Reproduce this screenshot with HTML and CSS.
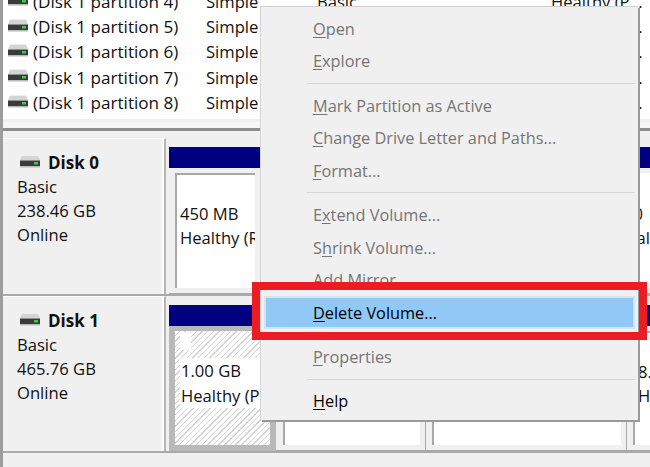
FILE: index.html
```html
<!DOCTYPE html>
<html lang="en">
<head>
<meta charset="utf-8">
<title>Disk Management</title>
<link rel="stylesheet" href="styles.css">
</head>
<body>
<svg class="defs" width="0" height="0" aria-hidden="true">
  <symbol id="disk" viewBox="0 0 20 13">
    <path d="M2 0.5H18L20 5.5H0Z" fill="#d4d4d4"/>
    <path d="M2 0.5H18" stroke="#efefef" stroke-width="1"/>
    <rect x="0" y="5.5" width="20" height="5.5" fill="#3a3a3a"/>
    <rect x="0" y="11" width="20" height="1.5" fill="#b8b8b8"/>
    <rect x="14" y="7" width="4" height="2.5" fill="#2fd13f"/>
  </symbol>
</svg>
<div class="app">
  <section class="list">
    <div class="row"><svg class="disk-icon"><use href="#disk"/></svg><span class="c-name">(Disk 1 partition 4)</span><span class="c-layout">Simple</span><span class="c-type">Basic</span><span class="c-status">Healthy (P...</span></div>
    <div class="row"><svg class="disk-icon"><use href="#disk"/></svg><span class="c-name">(Disk 1 partition 5)</span><span class="c-layout">Simple</span><span class="c-type">Basic</span><span class="c-status">Healthy (P...</span></div>
    <div class="row"><svg class="disk-icon"><use href="#disk"/></svg><span class="c-name">(Disk 1 partition 6)</span><span class="c-layout">Simple</span><span class="c-type">Basic</span><span class="c-status">Healthy (P...</span></div>
    <div class="row"><svg class="disk-icon"><use href="#disk"/></svg><span class="c-name">(Disk 1 partition 7)</span><span class="c-layout">Simple</span><span class="c-type">Basic</span><span class="c-status">Healthy (P...</span></div>
    <div class="row"><svg class="disk-icon"><use href="#disk"/></svg><span class="c-name">(Disk 1 partition 8)</span><span class="c-layout">Simple</span><span class="c-type">Basic</span><span class="c-status">Healthy (P...</span></div>
  </section>
  <div class="splitter"></div>
  <section class="disks">
    <div class="disk disk-0">
      <div class="label">
        <div class="label-title"><svg class="disk-icon"><use href="#disk"/></svg><b>Disk 0</b></div>
        <div>Basic</div>
        <div>238.46 GB</div>
        <div>Online</div>
      </div>
      <div class="volumes">
        <div class="bar"></div>
        <div class="parts">
          <div class="part part-a"><div class="inner"><div>450 MB</div><div>Healthy (Recovery)</div></div></div>
          <div class="part part-end"><div class="inner"><div class="end-size">100</div><div>Normal</div></div></div>
        </div>
      </div>
    </div>
    <div class="disk disk-1">
      <div class="label">
        <div class="label-title"><svg class="disk-icon"><use href="#disk"/></svg><b>Disk 1</b></div>
        <div>Basic</div>
        <div>465.76 GB</div>
        <div>Online</div>
      </div>
      <div class="volumes">
        <div class="bar"></div>
        <div class="parts">
          <div class="part part-sel"><div class="inner"><div class="notch"></div><div class="chip">1.00 GB<br>Healthy (P</div></div></div>
          <div class="part part-2"><div class="inner"></div></div>
          <div class="part part-3"><div class="inner"></div></div>
          <div class="part part-4"><div class="inner"><div>8.00 GB</div><div>Healthy (P</div></div></div>
        </div>
      </div>
    </div>
  </section>
</div>

<nav class="menu">
  <div class="item off"><u>O</u>pen</div>
  <div class="item off"><u>E</u>xplore</div>
  <hr class="sep">
  <div class="item off"><u>M</u>ark Partition as Active</div>
  <div class="item off"><u>C</u>hange Drive Letter and Paths...</div>
  <div class="item off"><u>F</u>ormat...</div>
  <hr class="sep">
  <div class="item off">E<u>x</u>tend Volume...</div>
  <div class="item off">S<u>h</u>rink Volume...</div>
  <div class="item off">A<u>d</u>d Mirror</div>
  <div class="item hot"><u>D</u>elete Volume...</div>
  <hr class="sep">
  <div class="item off"><u>P</u>roperties</div>
  <hr class="sep">
  <div class="item"><u>H</u>elp</div>
</nav>
<div class="callout"></div>
</body>
</html>
```
FILE: styles.css
```css
* { box-sizing: border-box; }
html, body { margin: 0; padding: 0; }
body {
  position: relative;
  width: 650px;
  height: 467px;
  overflow: hidden;
  background: #f0f0f0;
  color: #111;
  font-family: "Open Sans", "Noto Sans", sans-serif;
  font-size: 16.6px;
}
.defs { position: absolute; }
.app {
  display: flex;
  flex-direction: column;
  height: 467px;
  border-left: 3px solid #9d9d9d;
}
.list {
  height: 119px;
  background: #fff;
  overflow: hidden;
  font-size: 17.1px;
}
.row {
  display: flex;
  align-items: center;
  height: 25.4px;
  padding-left: 5px;
  white-space: nowrap;
  line-height: 25px;
}
.list .row:first-child { margin-top: -11.5px; }
.disk-icon { width: 20px; height: 13px; flex: none; }
.row .disk-icon { margin-top: -3px; }
.c-name { width: 173px; margin-left: 5px; }
.c-layout { width: 111px; font-size: 16.6px; }
.c-type { width: 234px; font-size: 16.6px; }
.c-status { font-size: 16.6px; }
.splitter {
  height: 12px;
  background: #f6f6f6;
  border-top: 3px solid #f0f0f0;
  border-bottom: 3px solid #8e8e8e;
}
.disks { flex: 0 0 322px; display: flex; flex-direction: column; }
.disk { display: flex; flex: none; }
.disk-0 { height: 165px; padding-top: 7px; border-bottom: 2px solid #a9a9a9; }
.disk-1 { height: 157px; border-bottom: 2px solid #a9a9a9; }
.label {
  flex: 0 0 163px;
  padding: 12px 0 0 14px;
  background: #f0f0f0;
  border-top: 1px solid #fff;
  border-right: 2px solid #b5b5b5;
  line-height: 24px;
  box-shadow: inset -2px 0 0 #fff;
}
.label-title {
  display: flex;
  align-items: center;
  gap: 8px;
  height: 24px;
  font-size: 17px;
}
.label-title .disk-icon { margin: -4px 0 0 3px; }
.label-title b { font-weight: 700; }
.volumes { flex: 1; min-width: 0; padding: 9px 0 0 3px; display: flex; flex-direction: column; overflow: hidden; }
.disk-0 .volumes { padding-top: 9px; margin-top: -7px; padding-top: 16px; }
.bar { height: 21px; flex: none; background: #000080; }
.parts { flex: 1; display: flex; min-height: 0; }
.part {
  flex: none;
  padding: 5px 5px 5px 6px;
  border-bottom: 1px solid #a9a9a9;
  border-right: 1px solid #a9a9a9;
  background: #f0f0f0;
}
.inner {
  height: 100%;
  padding: 27px 0 0 3px;
  background: #fff;
  border-left: 2px solid #a8a8a8;
  border-top: 2px solid #a8a8a8;
  white-space: nowrap;
  overflow: hidden;
  line-height: 24px;
}
.part-a { width: 92px; }
.part-end { width: 395px; }
.part-end .inner { text-align: right; border: 0; padding-right: 0; padding-top: 29px; }
.end-size { padding-right: 7px; }
.part-sel { width: 107px; padding: 5px 6px 6px 6px; background: #b9b9b9; border: 0; }
.part-sel .inner {
  border: 0;
  padding: 1px 0 0 5px;
  background: repeating-linear-gradient(135deg, #fff 0 3px, #d4d4d4 3px 4px);
}
.notch { width: 11px; height: 18px; background: #fff; margin-bottom: 8px; }
.chip { width: 82px; background: #fff; line-height: 25px; padding: 0 0 0 1px; }
.part-2 { width: 150px; padding-left: 7px; }
.part-3 { width: 201px; }
.part-4 { width: 40px; border-right: 0; }
.menu {
  position: absolute;
  left: 260px;
  top: 6px;
  width: 378px;
  height: 414px;
  padding: 5.5px 3px 0 3px;
  background: #f0f0f0;
  border-top: 1px solid #d0d0d0;
  border-left: 1px solid #d6d6d6;
  box-shadow: 2px 2px 0 #9a9a9a;
  font-size: 16.3px;
}
.item {
  display: flex;
  align-items: center;
  white-space: pre;
  height: 32.6px;
  padding-left: 48px;
  color: #000;
  border: 1px solid transparent;
}
.item u { text-underline-offset: 2px; text-decoration-thickness: 1px; }
.off { color: #757575; }
.hot {
  color: #000;
  padding-left: 47px;
  background: #90c8f6;
  border: 2px solid #d4e4f1;
}
.sep {
  height: 1px;
  margin: 5.3px 0 5.3px 43px;
  border: 0;
  background: #d7d7d7;
}
.callout {
  position: absolute;
  left: 252px;
  top: 282px;
  width: 395px;
  height: 58px;
  border: 8px solid #ed1c24;
}
```
